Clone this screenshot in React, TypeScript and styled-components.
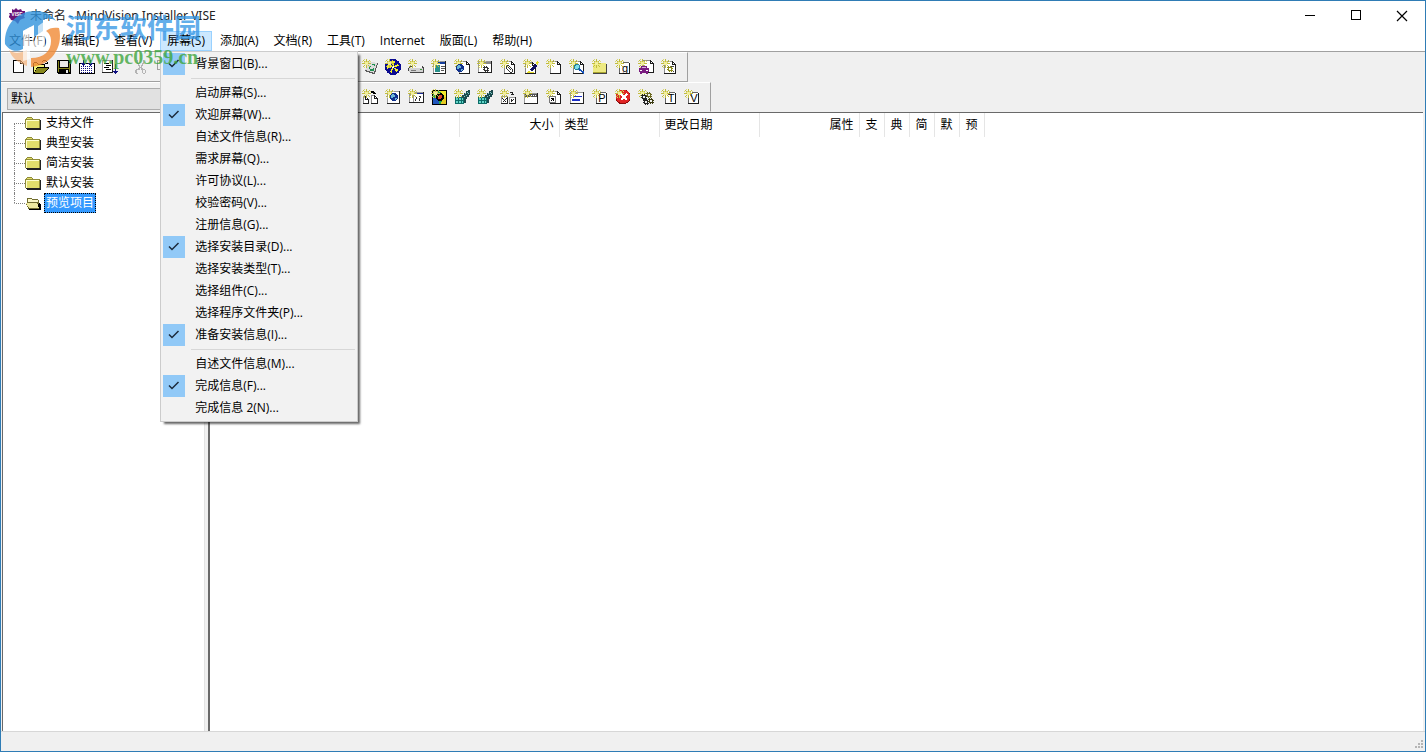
import React from "react";
import styled, { createGlobalStyle } from "styled-components";

const GlobalStyle = createGlobalStyle`
  *, *::before, *::after { box-sizing: border-box; }
  body {
    margin: 0;
    background: #f0f0f0;
    color: #000;
    font: 12px/16px "Open Sans", "Noto Sans CJK SC", sans-serif;
  }
  button, select { font: inherit; color: inherit; }
`;

const Window = styled.div`
  position: relative;
  display: flex;
  flex-direction: column;
  min-height: 100vh;
  border: 1px solid #2f7cb5;
  background: #f0f0f0;
`;

const TitleBar = styled.header`
  display: flex;
  align-items: center;
  height: 30px;
  padding-left: 8px;
  background: #fff;
`;

const Title = styled.h1`
  flex: 1;
  margin: 0 0 0 5px;
  font: 400 12px/16px "Noto Sans", "Noto Sans CJK SC", sans-serif;
  color: #222;
`;

const CaptionButton = styled.button`
  display: flex;
  align-items: center;
  justify-content: center;
  width: 46px;
  height: 30px;
  padding: 0;
  border: 0;
  background: none;
`;

const MenuBar = styled.nav`
  display: flex;
  gap: 1px;
  height: 21px;
  padding-left: 1px;
  background: #fff;
  border-bottom: 1px solid #a0a0a0;
`;

const MenuSlot = styled.div`
  position: relative;
`;

const MenuTitle = styled.button<{ $open?: boolean }>`
  height: 20px;
  padding: 0 6px;
  white-space: nowrap;
  border: 1px solid ${(p) => (p.$open ? "#99d1ff" : "transparent")};
  background: ${(p) => (p.$open ? "#cce8ff" : "transparent")};
  line-height: 18px;
`;

const Dropdown = styled.div`
  position: absolute;
  z-index: 2;
  top: 20px;
  left: 0;
  width: 198px;
  padding: 1px 2px 2px;
  background: #f2f2f2;
  border: 1px solid #ccc;
  box-shadow: 3px 3px 2px -1px rgba(0, 0, 0, 0.6);
`;

const MenuItem = styled.button`
  display: flex;
  align-items: center;
  width: 100%;
  height: 22px;
  padding: 0;
  border: 0;
  background: none;
  text-align: left;
  white-space: nowrap;
`;

const CheckCell = styled.span<{ $on?: boolean }>`
  display: flex;
  align-items: center;
  justify-content: center;
  width: 22px;
  height: 22px;
  margin-right: 10px;
  background: ${(p) => (p.$on ? "#91c9f7" : "transparent")};
`;

const MenuRule = styled.hr`
  height: 1px;
  margin: 3px 0 3px 28px;
  border: 0;
  background: #d7d7d7;
`;

const Toolbars = styled.div`
  display: flex;
  flex-direction: column;
  align-items: flex-start;
`;

const ToolRow = styled.div`
  display: flex;
  align-items: center;
  height: 30px;
  padding: 0 7px 0 5px;
  border-top: 1px solid #fff;
  border-right: 1px solid #a0a0a0;
  border-bottom: 1px solid #a0a0a0;
  & + & {
    border-bottom-color: #f0f0f0;
  }
`;

const ToolButton = styled.button`
  display: flex;
  align-items: center;
  justify-content: center;
  width: 23px;
  height: 22px;
  padding: 0;
  border: 0;
  background: none;
`;

const ToolGap = styled.span<{ $width: number }>`
  width: ${(p) => p.$width}px;
`;

const LayoutSelect = styled.select`
  appearance: none;
  width: 340px;
  height: 22px;
  margin: 4px 11px 0 1px;
  padding: 0 3px;
  border: 1px solid #adadad;
  border-radius: 0;
  background: #e1e1e1;
  line-height: 20px;
`;

const Workspace = styled.main`
  flex: 1;
  display: flex;
  padding-right: 2px;
`;

const TreePane = styled.section`
  width: 202px;
  margin-left: 1px;
  background: #fff;
  border-top: 1px solid #696969;
  border-left: 1px solid #696969;
`;

const Splitter = styled.div`
  width: 4px;
  background: #f0f0f0;
  border-left: 1px solid #e3e3e3;
`;

const ListPane = styled.section`
  flex: 1;
  min-width: 0;
  background: #fff;
  border-top: 1px solid #696969;
  border-left: 2px solid #696969;
`;

const Tree = styled.ul`
  margin: 0;
  padding: 0 0 0 11px;
  list-style: none;
`;

const TreeNode = styled.li`
  display: flex;
  align-items: center;
  height: 20px;
`;

const Branch = styled.span<{ $last?: boolean; $first?: boolean }>`
  align-self: stretch;
  display: flex;
  flex-direction: column;
  width: 11px;
  &::before {
    content: "";
    height: 10px;
    border-left: ${(p) => (p.$first ? "1px solid transparent" : "1px dotted #808080")};
  }
  &::after {
    content: "";
    height: 10px;
    border-left: ${(p) => (p.$last ? "1px solid transparent" : "1px dotted #808080")};
    border-top: 1px dotted #808080;
  }
`;

const TreeLabel = styled.button<{ $selected?: boolean }>`
  height: 20px;
  margin-left: 3px;
  padding: 0 1px;
  border: 1px ${(p) => (p.$selected ? "dotted #000" : "solid transparent")};
  background: ${(p) => (p.$selected ? "#3399ff" : "transparent")};
  color: ${(p) => (p.$selected ? "#fff" : "#000")};
  line-height: 18px;
`;

const FileTable = styled.table`
  table-layout: fixed;
  width: 774px;
  border-collapse: collapse;
`;

const HeaderCell = styled.th<{ $width: number; $align?: string }>`
  width: ${(p) => p.$width}px;
  height: 24px;
  padding: 0 5px;
  border-right: 1px solid #e5e5e5;
  font-weight: 400;
  text-align: ${(p) => p.$align ?? "left"};
  white-space: nowrap;
`;

const StatusBar = styled.footer`
  display: flex;
  align-items: flex-end;
  justify-content: flex-end;
  height: 20px;
  padding: 0 2px 2px 0;
  border-top: 1px solid #d7d7d7;
`;

const Watermark = styled.div`
  position: absolute;
  z-index: 3;
  top: 7px;
  left: 3px;
  display: flex;
  gap: 2px;
  pointer-events: none;
`;

const WatermarkText = styled.div`
  display: flex;
  flex-direction: column;
  gap: 4px;
  padding-top: 3px;
`;

const SiteName = styled.span`
  font: 700 27px/32px "Noto Sans CJK SC", sans-serif;
  color: rgba(48, 148, 228, 0.75);
  white-space: nowrap;
`;

const SiteUrl = styled.span`
  font: 700 20px/20px "Liberation Serif", serif;
  color: rgba(60, 165, 60, 0.8);
`;

/* ---- toolbar drawings, all on a 16 x 16 grid ---- */

const Icon = ({ children, size = 16 }: { children: React.ReactNode; size?: number }) => (
  <svg width={size} height={16} viewBox={`0 0 ${size} 16`} shapeRendering="crispEdges" aria-hidden="true">
    {children}
  </svg>
);

const Spark = () => (
  <>
    <path d="M3 3h3v3h-3z" fill="#f2ee9a" />
    <path
      d="M4 0h1v3h-1zM4 6h1v3h-1zM0 4h3v1h-3zM6 4h3v1h-3zM1 1h1v1h-1zM2 2h1v1h-1zM7 1h1v1h-1zM6 2h1v1h-1zM1 7h1v1h-1zM2 6h1v1h-1zM6 6h1v1h-1zM7 7h1v1h-1z"
      fill="#c2be3c"
    />
    <path d="M2 0h1v1h-1zM0 2h1v1h-1zM8 2h1v1h-1zM2 8h1v1h-1zM3 2h1v1h-1zM5 2h1v1h-1zM2 3h1v1h-1zM6 3h1v1h-1z" fill="#dcd878" />
  </>
);

const Page = ({ x = 4, y = 2, w = 11, h = 13, edge = "#8a8a8a" }: { x?: number; y?: number; w?: number; h?: number; edge?: string }) => (
  <>
    <path d={`M${x} ${y}h${w - 3}l3 3v${h - 3}h-${w}z`} fill="#fff" />
    <path d={`M${x} ${y}h${w - 3}v1h-${w - 3}zM${x} ${y}h1v${h}h-1z`} fill={edge} />
    <path
      d={`M${x} ${y + h - 1}h${w}v1h-${w}zM${x + w - 1} ${y + 3}h1v${h - 3}h-1zM${x + w - 4} ${y}h1v4h-1zM${x + w - 4} ${y + 3}h4v1h-4zM${x + w - 3} ${y + 1}h1v1h-1zM${x + w - 2} ${y + 2}h1v1h-1z`}
      fill="#1c1c1c"
    />
  </>
);

/* Sheet used behind a letter: no folded corner, so the letter stays clear. */
const Sheet = () => (
  <>
    <path d="M4 3h10l1 1v11h-11z" fill="#fff" />
    <path d="M8 3h6v1h-6zM4 8h1v7h-1z" fill="#666" />
    <path d="M4 14h11v1h-11zM14 4h1v11h-1z" fill="#1c1c1c" />
  </>
);

const Panel = ({ x = 3, y = 3, w = 12, h = 11 }: { x?: number; y?: number; w?: number; h?: number }) => (
  <>
    <rect x={x} y={y} width={w} height={h} fill="#222" />
    <rect x={x} y={y} width={w - 1} height={h - 1} fill="#999" />
    <rect x={x + 1} y={y + 1} width={w - 2} height={h - 2} fill="#fff" />
  </>
);

const Letter = ({ ch }: { ch: string }) => (
  <text x="10" y="13" textAnchor="middle" fontSize="11" fontFamily="Liberation Sans, sans-serif">
    {ch}
  </text>
);

const Globe = ({ x, y }: { x: number; y: number }) => (
  <g transform={`translate(${x} ${y})`}>
    <path d="M2 0h4v1h1v1h1v4h-1v1h-1v1h-4v-1h-1v-1h-1v-4h1v-1h1z" fill="#10308c" />
    <path d="M2 1h2v1h1v2h-2v1h-2v-3h1zM5 5h2v1h-1v1h-1z" fill="#6bb7d8" />
  </g>
);

const Gear = ({ x, y, fill = "#333" }: { x: number; y: number; fill?: string }) => (
  <path
    transform={`translate(${x} ${y})`}
    fillRule="evenodd"
    d="M1 0h1v1h1v-1h1v1h1v1h1v1h-1v1h1v1h-1v1h-1v-1h-1v1h-1v-1h-1v-1h-1v-1h1v-1h-1v-1h1zM2 2v2h2v-2z"
    fill={fill}
  />
);

const fileIcons: [string, React.ReactNode][] = [
  ["新建", <Page x={3} y={1} w={11} h={13} edge="#000" />],
  ["打开", (
    <>
      <path d="M1 4h4l1 1h5v3h-10zM1 8h3l-3 6z" fill="#f3f37a" />
      <path d="M4 9h11l-4 5h-10z" fill="#87871d" />
      <path d="M0 4h1v10h-1zM1 3h3v1h-3zM4 4h1v1h-1zM5 5h6v1h-6zM11 5h1v3h-1zM4 8h12v1h-12zM3 9h1v1h-1zM2 11h1v1h-1zM1 13h1v1h-1zM0 14h11v1h-11zM11 13h1v1h-1zM12 12h1v1h-1zM13 11h1v1h-1zM14 10h1v1h-1zM15 9h1v1h-1zM10 1h3v1h-3zM9 2h1v1h-1zM13 2h1v1h-1zM14 3h1v2h-1zM12 4h3v1h-3z" />
    </>
  )],
  ["保存", (
    <>
      <path d="M1 1h14v14h-13l-1-1z" />
      <path d="M2 2h1v11h-1zM13 4h1v9h-1zM3 9h10v1h-10z" fill="#82821b" />
      <path d="M4 2h8v6h-8zM10 11h2v3h-2z" fill="#e8e8e8" />
    </>
  )],
  ["生成", (
    <>
      <path d="M0 4h16v11h-16z" fill="#000" />
      <path d="M1 5h14v9h-14z" fill="#fff" />
      <path d="M2 7h12M2 9h12M2 11h12M2 13h12" stroke="#101080" strokeDasharray="1 1" transform="translate(0 .5)" />
      <path d="M4 1h1v3h2v1h-1v1h-1v1h-1v-1h-1v-1h-1v-1h2zM11 1h1v3h2v1h-1v1h-1v1h-1v-1h-1v-1h-1v-1h2z" fill="#101080" />
    </>
  )],
  ["排序", (
    <>
      <Panel x={0} y={1} w={11} h={13} />
      <path d="M2 4h5v1h-5zM4 6h5v1h-5zM2 8h5v1h-5zM4 10h5v1h-5z" />
      <path d="M13 5h1v7h2v1h-1v1h-1v1h-1v-1h-1v-1h-1v-1h2z" fill="#101080" />
    </>
  )],
];

const editIcons: [string, React.ReactNode][] = [
  ["剪切", (
    <>
      <path d="M5 1v3h1v2h1v2h1v-2h1v-2h1v-3h1v4h-1v2h-1v2h1v1h2v1h1v3h-1v1h-2v-1h-1v-3h-1v-2h-1v2h-1v3h-1v1h-2v-1h-1v-3h1v-1h2v-1h1v-2h-1v-2h-1v-4z" fill="#b4b4b4" />
      <path d="M4 11h2v3h-2zM10 11h2v3h-2z" fill="#f0f0f0" />
    </>
  )],
  ["复制", <path d="M1.500 1.500h6v9h-6zM6.500 5.500h7v9h-7z" fill="#f0f0f0" stroke="#a0a0a0" />],
];

const itemIcons: [string, React.ReactNode][] = [
  ["卸载", (
    <>
      <path d="M6 2l9 2-3 11-9-3z" fill="#dcdcdc" />
      <path d="M15 4h1l-3 11h-2l-8-3v-1l9 3z" fill="#5a5a5a" />
      <path d="M7 7h2v1h-1v2h-1zM10 5h3v2h-1v-1h-2zM8 10h3v-1h1v3h-4z" fill="#209050" />
      <Spark />
    </>
  )],
  ["操作", (
    <>
      <circle cx="8" cy="8" r="7.500" fill="#f4f02a" />
      <circle cx="8" cy="8" r="7" fill="none" stroke="#0a0a90" strokeWidth="2" />
      <path d="M8 8L2 3l4-2zM8 8l3-7 3 3zM8 8l7-1 0 4zM8 8l4 6-5 1zM8 8l-4 6-3-4z" fill="#0a0a90" />
      <path d="M7 7h2v2h-2z" fill="#fff" />
      <Spark />
    </>
  )],
  ["磁盘空间", (
    <>
      <path d="M3 7h11l2 2v5h-13l-3-2v-3z" fill="#444" />
      <path d="M4 7h10v2h-12z" fill="#f4f4f4" />
      <path d="M1 9h14v4h-14z" fill="#d2d2d2" />
      <path d="M3 11h5v1h-5z" fill="#777" />
      <path d="M12 10h2v1h-2z" fill="#3a9a3a" />
      <Spark />
    </>
  )],
  ["注册表", (
    <>
      <Panel x={2} y={2} w={13} h={13} />
      <path d="M3 3h11v2h-11z" fill="#153d9b" />
      <path d="M4 6h5v7h-5z" fill="#28908a" />
      <path d="M10 7h4v1h-4zM10 9h4v1h-4zM10 11h3v1h-3z" fill="#555" />
      <Spark />
    </>
  )],
  ["网页", <><Page x={5} /><Spark /><Globe x={2} y={5} /></>],
  ["程序", (
    <>
      <Panel x={1} y={2} w={14} h={12} />
      <path d="M2 3h12v2h-12z" fill="#888" />
      <Spark />
      <Gear x={6} y={7} />
    </>
  )],
  ["附件", (
    <>
      <Page />
      <path d="M6 7l2-1 5 5-1 2-2 0-4-4z" fill="#fff" stroke="#333" />
      <path d="M8 8l3 3" stroke="#333" />
      <Spark />
    </>
  )],
  ["编辑文件", (
    <>
      <Page x={2} y={3} w={11} h={12} />
      <path d="M6 11l6-6 2 2-5 5z" fill="#101060" />
      <path d="M12 4l2-2 2 1-1 3zM5 12l3 1 4 0-3 1h-5z" fill="#e5dd2a" />
      <Spark />
    </>
  )],
  ["空白文件", <><Page /><Spark /></>],
  ["查找", (
    <>
      <Page />
      <Spark />
      <circle cx="8" cy="8" r="2.500" fill="#7fe0ec" stroke="#28809a" />
      <path d="M10 10l5 4" stroke="#1450b8" strokeWidth="2" />
    </>
  )],
  ["文件夹", (
    <>
      <path d="M1 4h13v1h1v10h-14z" fill="#444" />
      <path d="M1 5h6l1-1h6v10h-13z" fill="#eeea82" />
      <path d="M1 13h13v1h-13z" fill="#a8a430" />
      <Spark />
    </>
  )],
  ["组", <><Sheet /><Spark /><Letter ch="g" /></>],
  ["驱动", (
    <>
      <Page x={5} y={1} />
      <Spark />
      <path d="M1 9h2v-2h6v2h2v4h-1v2h-2v-1h-4v1h-2v-2h-1z" fill="#7a1d80" />
      <path d="M4 8h4v1h-4z" fill="#d7b0e0" />
      <path d="M2 11h2v1h-2zM8 11h2v1h-2z" fill="#fff" />
    </>
  )],
  ["脚本", (
    <>
      <Page x={3} w={12} />
      <Spark />
      <Gear x={6} y={7} fill="#8a8a18" />
      <path d="M10 7h3v1h-3zM12 12h1v1h-1z" fill="#444" />
    </>
  )],
];

const Cubes = () => (
  <>
    <path d="M1 8h9v7h-9z" fill="#0c6c68" />
    <path d="M2 9h2v2h-2zM5 9h2v2h-2zM2 12h2v2h-2zM5 12h2v2h-2zM8 9h1v2h-1zM8 12h1v2h-1z" fill="#62d4c8" />
    <path d="M8 6h2v-2h2v-2h2v-1h2v5h-1v2h-2v2h-1v4h-2v-5h-2z" fill="#1c4a4e" />
    <path d="M11 4h1v1h-1zM13 3h1v1h-1zM12 6h1v1h-1zM14 4h1v1h-1zM10 7h1v1h-1z" fill="#7fc9c4" />
    <Spark />
  </>
);

const actionIcons: [string, React.ReactNode][] = [
  ["移动", (
    <>
      <Page x={1} y={7} w={6} h={8} />
      <Page x={9} y={6} w={7} h={9} />
      <path d="M9 2h3v1h1v1h1v1h-3v-1h-2z" />
      <Spark />
    </>
  )],
  ["链接", <><Panel x={2} y={2} w={13} h={13} /><Spark /><Globe x={5} y={4} /></>],
  ["对话框", (
    <>
      <Panel x={1} y={5} w={10} h={9} />
      <Panel x={5} y={3} w={11} h={11} />
      <path d="M6 4h9v1h-9z" fill="#1a2a90" />
      <Spark />
      <path d="M8 8h1v2h-1zM11 7h2v1h-2zM7 10h1v2h-1zM12 8h1v1h-1zM11 9h1v3h-1z" fill="#333" />
    </>
  )],
  ["图片", (
    <>
      <path d="M1 1h15v15h-15z" />
      <path d="M2 2h13v13h-13z" fill="#24a848" />
      <path d="M9 2h6v6h-3z" fill="#f0e62a" />
      <path d="M2 9h6v6h-6z" fill="#2056bd" />
      <path d="M12 8h3v7h-5z" fill="#e5cb22" />
      <circle cx="9" cy="8" r="3" fill="#da4028" stroke="#000" strokeWidth="2" />
      <Spark />
    </>
  )],
  ["导入注册表", <Cubes />],
  ["导出注册表", <Cubes />],
  ["重命名", (
    <>
      <Panel x={1} y={7} w={7} h={8} />
      <Panel x={9} y={8} w={7} h={7} />
      <path d="M2 9h1v1h1v1h1v-1h1v-1h1v1h-1v1h-1v1h1v1h-1v-1h-1v1h-1v-1h1v-1h-1v-1h-1zM11 10h1v1h1v-1h1v1h-1v1h-1v1h-1zM10 3h3v2h1v1h-3v-1h1v-1h-2z" fill="#222" />
      <Spark />
    </>
  )],
  ["窗口", (
    <>
      <Panel x={1} y={4} w={14} h={11} />
      <path d="M2 5h12v3h-12z" fill="#555" />
      <path d="M8 6h1v1h-1zM10 6h1v1h-1zM12 6h1v1h-1z" fill="#fff" />
      <Spark />
    </>
  )],
  ["快捷方式", (
    <>
      <Page />
      <Spark />
      <path d="M3.500 7.500h6v6h-6z" fill="#fff" stroke="#777" />
      <path d="M6 9h2v3h-1v-1h-1v1h-1v-1h1v-1h-1v-1z" />
    </>
  )],
  ["文本", (
    <>
      <Panel x={1} y={3} w={14} h={12} />
      <Spark />
      <path d="M5 7h8v1h-8zM3 10h8v2h-8z" fill="#1c30c8" />
    </>
  )],
  ["补丁", <><Sheet /><Spark /><Letter ch="P" /></>],
  ["删除", (
    <>
      <circle cx="8" cy="8" r="7.500" fill="#8c0c0c" />
      <circle cx="8" cy="7.500" r="7" fill="#e02424" />
      <Spark />
      <path d="M6 5l6 6M12 5l-6 6" stroke="#fff" strokeWidth="2" />
    </>
  )],
  ["服务", (
    <>
      <Spark />
      <Gear x={3} y={5} fill="#222" />
      <Gear x={8} y={3} fill="#6c6a20" />
      <Gear x={5} y={10} fill="#222" />
      <Gear x={10} y={9} fill="#3a3a10" />
    </>
  )],
  ["测试", <><Sheet /><Spark /><Letter ch="T" /></>],
  ["变量", <><Sheet /><Spark /><Letter ch="V" /></>],
];

const FolderIcon = ({ open }: { open?: boolean }) => (
  <Icon>
    {open ? (
      <>
        <path d="M2 3h5v1h6v1h1v3h1v1h1v6h-12v-1h-1v-2h-1v-2h-1v-2h1z" fill="#706c30" />
        <path d="M3 4h4v1h6v2h-10z" fill="#fbf8c8" />
        <path d="M1 8h11l2 5h-10z" fill="#efeaa0" />
        <path d="M14 8h1v1h1v6h-2v-3h-1v-3h1zM4 14h12v1h-12z" />
      </>
    ) : (
      <>
        <path d="M1 3h1v-1h5v1h1v1h7v1h1v10h-14v-1h-1z" fill="#222" />
        <path d="M0 4h1v-1h1v-1h5v1h1v1h7v9h-15z" fill="#908c38" />
        <path d="M1 5h13v8h-13zM2 3h5v1h-5z" fill="#e2de6c" />
        <path d="M1 5h13v1h-13zM1 6h1v7h-1z" fill="#ffffcf" />
      </>
    )}
  </Icon>
);

const AppIcon = () => (
  <svg width="16" height="16" viewBox="0 0 16 16" aria-hidden="true">
    <path d="M5 2l2-2 2 2 3-1 1 2h3v3l-1 2 1 2-3 1-2 1-2 4-3-3-4-1-1-2-2-1 2-2-1-2h3V1z" fill="#6b1478" />
    <text x="8" y="8" textAnchor="middle" fontSize="5" fontWeight="700" fill="#fff" fontFamily="Liberation Sans, sans-serif">VISE</text>
  </svg>
);

const CheckMark = () => (
  <svg width="12" height="10" viewBox="0 0 12 10" aria-hidden="true">
    <path d="M1 4.500l3 3L10.500 1" fill="none" stroke="#1c2b3c" strokeWidth="1.500" />
  </svg>
);

const WatermarkLogo = () => (
  <svg width="60" height="60" viewBox="0 0 60 60" aria-hidden="true">
    <path d="M1 36C0 16 14 3 31 3c10 0 17 4 21 10-5-3-9-3-13-1v11l-9 6V17l-11 6v18C11 45 5 42 1 36z" fill="#2f92dc" fillOpacity=".8" />
    <path d="M55 20c5 20-9 38-28 39v-9c13 0 20-7 20-17 0-5-2-8-5-10 3-3 8-4 13-3z" fill="#f08a35" fillOpacity=".8" />
    <path d="M5 42c5 4 12 3 18 0v16C14 55 8 50 5 42z" fill="#f6ae70" fillOpacity=".65" />
    <path d="M19 23l7-4v16l8-4V18l7-5v26l-7 4v-5l-8 4v9l-7 2z" fill="#fff" fillOpacity=".65" />
  </svg>
);

type Entry = { label: string; checked?: boolean } | null;

const screenMenu: Entry[] = [
  { label: "背景窗口(B)...", checked: true },
  null,
  { label: "启动屏幕(S)..." },
  { label: "欢迎屏幕(W)...", checked: true },
  { label: "自述文件信息(R)..." },
  { label: "需求屏幕(Q)..." },
  { label: "许可协议(L)..." },
  { label: "校验密码(V)..." },
  { label: "注册信息(G)..." },
  { label: "选择安装目录(D)...", checked: true },
  { label: "选择安装类型(T)..." },
  { label: "选择组件(C)..." },
  { label: "选择程序文件夹(P)..." },
  { label: "准备安装信息(I)...", checked: true },
  null,
  { label: "自述文件信息(M)..." },
  { label: "完成信息(F)...", checked: true },
  { label: "完成信息 2(N)..." },
];

const menus = ["文件(F)", "编辑(E)", "查看(V)", "屏幕(S)", "添加(A)", "文档(R)", "工具(T)", "Internet", "版面(L)", "帮助(H)"];
const folders = ["支持文件", "典型安装", "简洁安装", "默认安装", "预览项目"];
const columns: { label: string; width: number; align?: string }[] = [
  { label: "", width: 249 },
  { label: "大小", width: 100, align: "right" },
  { label: "类型", width: 100 },
  { label: "更改日期", width: 100 },
  { label: "属性", width: 100, align: "right" },
  ...["支", "典", "简", "默", "预"].map((label) => ({ label, width: 25, align: "center" })),
];

const Tools = ({ items }: { items: [string, React.ReactNode][] }) => (
  <>
    {items.map(([name, art]) => (
      <ToolButton key={name} aria-label={name}>
        <Icon>{art}</Icon>
      </ToolButton>
    ))}
  </>
);

export default function App() {
  return (
    <>
      <GlobalStyle />
      <Window>
        <TitleBar>
          <AppIcon />
          <Title>未命名 - MindVision Installer VISE</Title>
          <CaptionButton aria-label="最小化">
            <Icon><path d="M3 7h10v1h-10z" /></Icon>
          </CaptionButton>
          <CaptionButton aria-label="最大化">
            <Icon><path d="M3.500 2.500h9v9h-9z" fill="none" stroke="#000" /></Icon>
          </CaptionButton>
          <CaptionButton aria-label="关闭">
            <svg width="16" height="16" viewBox="0 0 16 16" aria-hidden="true">
              <path d="M3 3l10 10M13 3L3 13" stroke="#000" strokeWidth="1.200" />
            </svg>
          </CaptionButton>
        </TitleBar>

        <MenuBar>
          {menus.map((label) => {
            const open = label === "屏幕(S)";
            return (
              <MenuSlot key={label}>
                <MenuTitle $open={open} aria-expanded={open}>{label}</MenuTitle>
                {open && (
                  <Dropdown role="menu">
                    {screenMenu.map((entry, i) =>
                      entry ? (
                        <MenuItem key={i} role="menuitemcheckbox" aria-checked={!!entry.checked}>
                          <CheckCell $on={entry.checked}>{entry.checked && <CheckMark />}</CheckCell>
                          {entry.label}
                        </MenuItem>
                      ) : (
                        <MenuRule key={i} />
                      )
                    )}
                  </Dropdown>
                )}
              </MenuSlot>
            );
          })}
        </MenuBar>

        <Toolbars>
          <ToolRow>
            <Tools items={fileIcons} />
            <ToolGap $width={8} />
            <Tools items={editIcons} />
            <ToolGap $width={183} />
            <Tools items={itemIcons} />
          </ToolRow>
          <ToolRow>
            <LayoutSelect aria-label="版面" defaultValue="默认">
              <option>默认</option>
            </LayoutSelect>
            <Tools items={actionIcons} />
          </ToolRow>
        </Toolbars>

        <Workspace>
          <TreePane>
            <Tree>
              {folders.map((name, i) => {
                const last = i === folders.length - 1;
                return (
                  <TreeNode key={name}>
                    <Branch $first={i === 0} $last={last} />
                    <FolderIcon open={last} />
                    <TreeLabel $selected={last}>{name}</TreeLabel>
                  </TreeNode>
                );
              })}
            </Tree>
          </TreePane>
          <Splitter />
          <ListPane>
            <FileTable>
              <thead>
                <tr>
                  {columns.map((c) => (
                    <HeaderCell key={c.label} $width={c.width} $align={c.align}>{c.label}</HeaderCell>
                  ))}
                </tr>
              </thead>
            </FileTable>
          </ListPane>
        </Workspace>

        <StatusBar>
          <svg width="9" height="9" viewBox="0 0 9 9" shapeRendering="crispEdges" aria-hidden="true">
            <path d="M7 0h2v2h-2zM4 3h2v2h-2zM7 3h2v2h-2zM1 6h2v2h-2zM4 6h2v2h-2zM7 6h2v2h-2z" fill="#b5b5b5" />
          </svg>
        </StatusBar>

        <Watermark>
          <WatermarkLogo />
          <WatermarkText>
            <SiteName>河东软件园</SiteName>
            <SiteUrl>www.pc0359.cn</SiteUrl>
          </WatermarkText>
        </Watermark>
      </Window>
    </>
  );
}
